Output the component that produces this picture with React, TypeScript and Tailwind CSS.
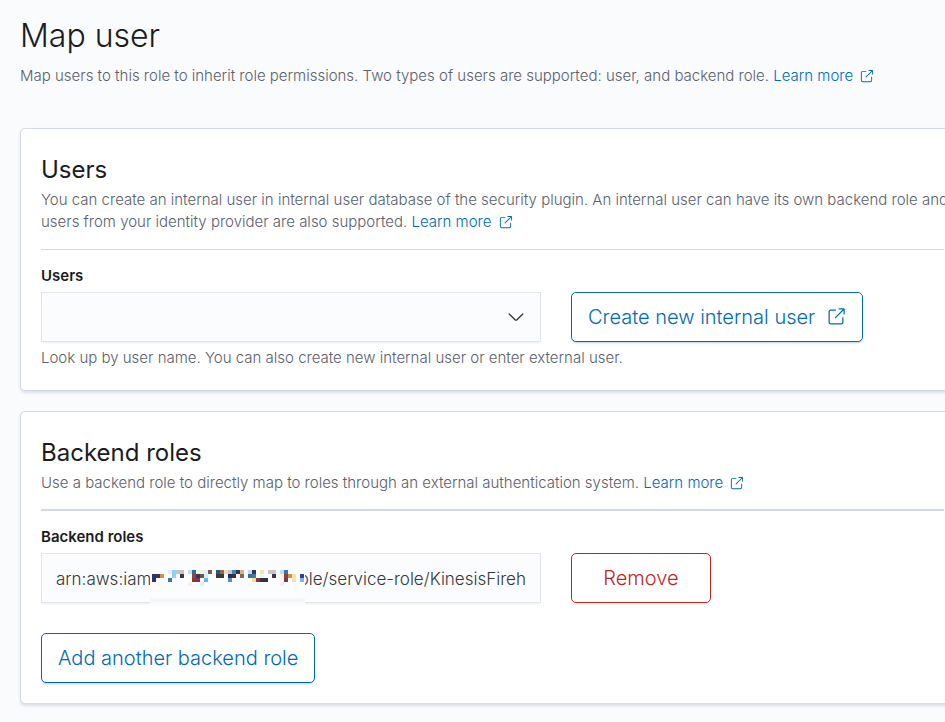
import type { ReactNode } from 'react';

function PopoutIcon({ className }: { className: string }) {
  return (
    <svg className={className} viewBox="0 0 16 16" fill="currentColor" aria-hidden="true">
      <path d="M13 8.5a.5.5 0 1 1 1 0V12a2 2 0 0 1-2 2H4a2 2 0 0 1-2-2V4a2 2 0 0 1 2-2h3.5a.5.5 0 0 1 0 1H4a1 1 0 0 0-1 1v8a1 1 0 0 0 1 1h8a1 1 0 0 0 1-1V8.500Zm-5.120.339a.5.5 0 1 1-.706-.707L13.305 2H10.500a.5.5 0 1 1 0-1H14a1 1 0 0 1 1 1v3.500a.5.5 0 1 1-1 0V2.720L7.880 8.840Z" />
    </svg>
  );
}

function LearnMore() {
  return (
    <a href="#learn-more" className="whitespace-nowrap text-[#006bb4]">
      Learn more <PopoutIcon className="ml-[2px] inline size-[15px] align-[-3px]" />
    </a>
  );
}

function Panel({ title, description, rule, children }: { title: string; description: ReactNode; rule: string; children: ReactNode }) {
  return (
    <section className="-mr-10 rounded-[5px] border border-[#d3dae6] bg-white p-5 shadow-[0_2px_3px_rgba(152,162,179,0.3)]">
      <h2 className="pt-0.5 text-[24px] leading-[38px] text-[#1a1c21]">{title}</h2>
      <p className="font-light whitespace-nowrap text-[#59606c]">{description}</p>
      <hr className={rule} />
      {children}
    </section>
  );
}

const fieldStyle =
  'block h-[50px] w-full appearance-none border border-[#e0e4ee] bg-[#fbfcfd] px-[14px] pt-[2px] text-[17px] font-light text-[#343741] shadow-[0_2px_2px_-1px_rgba(152,162,179,0.2)] outline-none';

const primaryButton =
  'flex h-[50px] items-center rounded-[5px] border border-[#006bb4] bg-white px-4 text-[20px] font-light whitespace-nowrap text-[#006bb4] shadow-[0_2px_2px_-1px_rgba(54,97,126,0.3)]';

// Each run is [column, row, width, colour] on a grid of 4px cells.
const mosaic: [number, number, number, string][] = [
  [4, 0, 1, '#e8ecf0'], [5, 0, 1, '#8ed0fa'], [6, 0, 2, '#c4c4c6'], [9, 0, 1, '#c5dff2'], [10, 0, 1, '#2a6cae'],
  [11, 0, 1, '#fdf0cf'], [12, 0, 1, '#ecf0ef'], [13, 0, 1, '#d9f6fb'], [14, 0, 1, '#805c48'], [16, 0, 1, '#2f578a'],
  [17, 0, 1, '#976b45'], [18, 0, 1, '#edd8c9'], [19, 0, 1, '#c6c7cb'], [20, 0, 1, '#3a87c2'], [21, 0, 1, '#33344f'],
  [22, 0, 1, '#d8b384'], [24, 0, 1, '#c1dcf0'], [25, 0, 1, '#393553'], [27, 0, 1, '#fbe0a9'], [29, 0, 2, '#c5c6c8'],
  [32, 0, 1, '#c1dcf0'], [33, 0, 1, '#3a74b0'],
  [0, 1, 1, '#2d3185'], [1, 1, 1, '#3a3350'], [2, 1, 1, '#cb9446'], [5, 1, 1, '#8ed0fa'], [7, 1, 1, '#393553'],
  [8, 1, 1, '#fdfce0'], [10, 1, 1, '#8a4545'], [11, 1, 1, '#35345a'], [12, 1, 1, '#56603c'], [13, 1, 1, '#d5eef5'],
  [16, 1, 1, '#393553'], [17, 1, 1, '#47332f'], [19, 1, 1, '#2a2c60'], [20, 1, 1, '#3b3040'], [22, 1, 1, '#8a6a42'],
  [24, 1, 1, '#3d6f94'], [25, 1, 1, '#417f96'], [27, 1, 1, '#dffaf9'], [30, 1, 1, '#393553'], [32, 1, 1, '#fdfce0'],
  [33, 1, 1, '#8a4340'], [34, 1, 1, '#cb9446'], [35, 1, 1, '#fbe0a9'], [37, 1, 1, '#2c4590'],
  [0, 2, 1, '#2d3185'], [4, 2, 1, '#3a74b0'], [10, 2, 2, '#8b3440'], [13, 2, 1, '#6fb2e4'], [19, 2, 1, '#4f93d0'],
  [21, 2, 1, '#f2f8fd'], [25, 2, 1, '#f8d9a0'], [26, 2, 1, '#8b3440'], [27, 2, 2, '#2e3440'], [33, 2, 1, '#8b3440'],
  [35, 2, 1, '#fbe0a9'], [37, 2, 1, '#7ab8f0'],
  [1, 3, 1, '#fdf6f6'], [9, 3, 1, '#fbeeee'], [12, 3, 1, '#ededf0'], [24, 3, 1, '#fdf6f6'], [32, 3, 1, '#fbeeee'],
];

function Redaction() {
  return (
    <svg className="pointer-events-none absolute top-[9px] left-[109px] h-[43px] w-[155px]" viewBox="0 0 155 43" shapeRendering="crispEdges" aria-hidden="true">
      <rect width="155" height="43" fill="#fbfcfd" />
      <rect y="36" width="155" height="4" fill="#f5f6fa" />
      {mosaic.map(([x, y, w, fill]) => (
        <rect key={`${x}-${y}`} x={2 + x * 4} y={8 + y * 4} width={w * 4} height="4" fill={fill} />
      ))}
    </svg>
  );
}

export default function App() {
  return (
    <main className="min-h-screen overflow-hidden bg-[#fafbfd] px-5 pt-4 pb-[18px] font-[Inter,'Liberation_Sans',sans-serif] text-[15px] leading-[22px]">
      <h1 className="text-[32px] leading-10 font-light text-[#1a1c21]">Map user</h1>
      <p className="mt-[9px] mb-[41px] font-light whitespace-nowrap text-[#59606c]">
        Map users to this role to inherit role permissions. Two types of users are supported: user, and backend role. <LearnMore />
      </p>

      <div className="flex flex-col gap-5">
        <Panel
          title="Users"
          rule="mt-4 mb-[15px] border-[#d3dae6]"
          description={
            <>
              You can create an internal user in internal user database of the security plugin. An internal user can have its own backend role and
              <br />
              users from your identity provider are also supported. <LearnMore />
            </>
          }
        >
          <div className="flex items-start gap-[30px]">
            <div className="w-[500px]">
              <label htmlFor="users" className="mb-[5px] block font-semibold text-[#1a1c21]">Users</label>
              <div className="relative">
                <select id="users" className={fieldStyle} defaultValue="">
                  <option value="" />
                </select>
                <svg className="pointer-events-none absolute top-[15px] right-[15px] size-5" viewBox="0 0 16 16" fill="#343741" aria-hidden="true">
                  <path d="M13.069 5.157 8.384 9.768a.546.546 0 0 1-.768 0L2.930 5.158a.552.552 0 0 0-.771 0 .530.530 0 0 0 0 .759l4.684 4.610a1.650 1.650 0 0 0 2.312 0l4.684-4.610a.530.530 0 0 0 0-.760.552.552 0 0 0-.771 0Z" />
                </svg>
              </div>
              <p className="mt-[5px] mb-px font-light whitespace-nowrap text-[#59606c]">
                Look up by user name. You can also create new internal user or enter external user.
              </p>
            </div>
            <button type="button" className={`${primaryButton} mt-[27px] gap-[11px]`}>
              Create new internal user
              <PopoutIcon className="size-5" />
            </button>
          </div>
        </Panel>

        <Panel
          title="Backend roles"
          rule="mt-[15px] mb-[15px] border-t-2 border-[#d3dae6]"
          description={
            <>
              Use a backend role to directly map to roles through an external authentication system. <LearnMore />
            </>
          }
        >
          <div className="flex items-end gap-[30px]">
            <div className="w-[500px]">
              <label htmlFor="backend-role" className="mb-[5px] block font-semibold text-[#1a1c21]">Backend roles</label>
              <div className="relative">
                <input id="backend-role" type="text" className={fieldStyle} defaultValue="arn:aws:iam::444444000000:role/service-role/KinesisFirehose" />
                <Redaction />
              </div>
            </div>
            <button type="button" className="h-[50px] w-[140px] rounded-[5px] border border-[#bd271e] bg-white text-[20px] font-light text-[#bd271e] shadow-[0_2px_2px_-1px_rgba(152,162,179,0.3)]">
              Remove
            </button>
          </div>
          <button type="button" className={`${primaryButton} mt-[30px]`}>Add another backend role</button>
        </Panel>
      </div>
    </main>
  );
}
